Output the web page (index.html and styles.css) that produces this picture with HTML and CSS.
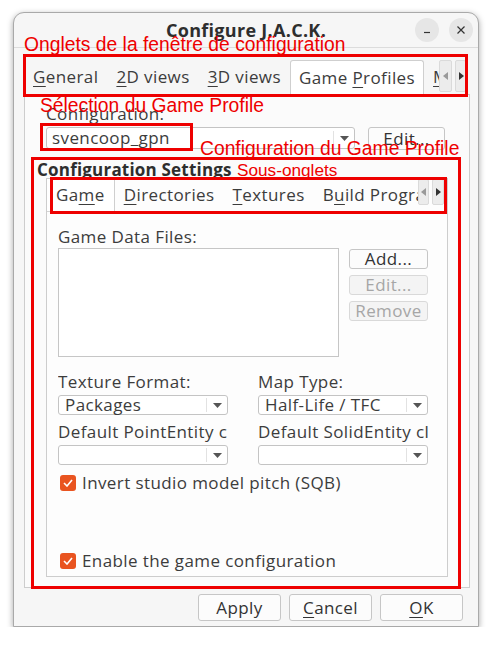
FILE: index.html
```html
<!DOCTYPE html>
<html>
<head>
<meta charset="utf-8">
<link rel="stylesheet" href="styles.css">
</head>
<body>
<div class="window">
  <div class="titlebar">
    <span></span>
    <span class="title">Configure J.A.C.K.</span>
    <div class="wbtns">
      <span class="wbtn"><svg width="10" height="10" viewBox="0 0 10 10"><path d="M2 7.5h6" stroke="#333" stroke-width="1.2"/></svg></span>
      <span class="wbtn"><svg width="10" height="10" viewBox="0 0 10 10"><path d="M1.5 1.5l7 7M8.5 1.5l-7 7" stroke="#333" stroke-width="1.2"/></svg></span>
    </div>
  </div>

  <div class="tabwidget">
    <div class="tabbar">
      <div class="tabs">
        <div class="tab"><span><u>G</u>eneral</span></div>
        <div class="tab"><span><u>2</u>D views</span></div>
        <div class="tab"><span><u>3</u>D views</span></div>
        <div class="tab sel"><span>Game <u>P</u>rofiles</span></div>
        <div class="tab"><span><u>M</u>isc</span></div>
      </div>
      <div class="scroll outer">
        <span class="sbtn left"><svg width="6" height="8" viewBox="0 0 6 8"><path d="M5 0v8L0 4z" fill="#9a9a9a"/></svg></span>
        <span class="sbtn right"><svg width="6" height="8" viewBox="0 0 6 8"><path d="M1 0v8l5-4z" fill="#333"/></svg></span>
      </div>
    </div>

    <div class="pane">
      <div class="config">
        <div class="label">Configuration:</div>
        <div class="config-row">
          <div class="combo wide"><span class="val">svencoop_gpn</span><span class="arr"><svg width="9" height="5" viewBox="0 0 9 5"><path d="M0 0h9L4.5 5z" fill="#555"/></svg></span></div>
          <div class="btn edit">Edit...</div>
        </div>
      </div>

      <div class="gtitle">Configuration Settings</div>
      <div class="group">
        <div class="tabbar inner">
          <div class="tabs">
            <div class="tab sel"><span>Ga<u>m</u>e</span></div>
            <div class="tab"><span><u>D</u>irectories</span></div>
            <div class="tab"><span><u>T</u>extures</span></div>
            <div class="tab"><span>B<u>u</u>ild Programs</span></div>
          </div>
          <div class="scroll">
            <span class="sbtn left"><svg width="6" height="8" viewBox="0 0 6 8"><path d="M5 0v8L0 4z" fill="#9a9a9a"/></svg></span>
            <span class="sbtn right"><svg width="6" height="8" viewBox="0 0 6 8"><path d="M1 0v8l5-4z" fill="#333"/></svg></span>
          </div>
        </div>

        <div class="inner-content">
          <div class="label">Game Data Files:</div>
          <div class="files">
            <div class="list"></div>
            <div class="side">
              <div class="btn small">Add...</div>
              <div class="btn small disabled">Edit...</div>
              <div class="btn small disabled">Remove</div>
            </div>
          </div>

          <div class="grid2">
            <div class="field">
              <div class="label clip">Texture Format:</div>
              <div class="combo"><span class="val">Packages</span><span class="arr"><svg width="9" height="5" viewBox="0 0 9 5"><path d="M0 0h9L4.5 5z" fill="#555"/></svg></span></div>
            </div>
            <div class="field">
              <div class="label clip">Map Type:</div>
              <div class="combo"><span class="val">Half-Life / TFC</span><span class="arr"><svg width="9" height="5" viewBox="0 0 9 5"><path d="M0 0h9L4.5 5z" fill="#555"/></svg></span></div>
            </div>
            <div class="field">
              <div class="label clip">Default PointEntity class:</div>
              <div class="combo"><span class="val"></span><span class="arr"><svg width="9" height="5" viewBox="0 0 9 5"><path d="M0 0h9L4.5 5z" fill="#555"/></svg></span></div>
            </div>
            <div class="field">
              <div class="label clip">Default SolidEntity class:</div>
              <div class="combo"><span class="val"></span><span class="arr"><svg width="9" height="5" viewBox="0 0 9 5"><path d="M0 0h9L4.5 5z" fill="#555"/></svg></span></div>
            </div>
          </div>

          <div class="check first"><span class="box"><svg width="10" height="8" viewBox="0 0 10 8"><path d="M1 4l3 3 5-6" stroke="#fff" stroke-width="1.6" fill="none"/></svg></span><span>Invert studio model pitch (SQB)</span></div>
          <div class="check last"><span class="box"><svg width="10" height="8" viewBox="0 0 10 8"><path d="M1 4l3 3 5-6" stroke="#fff" stroke-width="1.6" fill="none"/></svg></span><span>Enable the game configuration</span></div>
        </div>
      </div>
    </div>
  </div>

  <div class="buttons">
    <div class="btn big"><span>Apply</span></div>
    <div class="btn big"><span><u>C</u>ancel</span></div>
    <div class="btn big"><span><u>O</u>K</span></div>
  </div>
</div>

<div class="annot">
  <div class="note n1">Onglets de la fenêtre de configuration</div>
  <div class="note n2">Sélection du Game Profile</div>
  <div class="note n3">Configuration du Game Profile</div>
  <div class="note n4">Sous-onglets</div>
  <div class="rbox b1"></div>
  <div class="rbox b2"></div>
  <div class="rbox b3"></div>
  <div class="rbox b4"></div>
</div>
</body>
</html>
```

FILE: styles.css
```css
body {
  margin: 0;
  background: #ffffff;
  font-family: "Open Sans", "Noto Sans", sans-serif;
  font-size: 17px;
  line-height: 20px;
  letter-spacing: 0.4px;
  color: #3c3c3c;
}

u {
  text-decoration-thickness: 1px;
  text-underline-offset: 3px;
}

.window {
  margin: 12px 0 0 13px;
  width: 466px;
  box-sizing: border-box;
  border: 1px solid #a9a9a9;
  border-radius: 11px 11px 0 0;
  background: #f6f6f6;
  box-shadow: 0 2px 6px rgba(0, 0, 0, 0.35);
  display: flex;
  flex-direction: column;
  padding-bottom: 5px;
}

.titlebar {
  height: 34px;
  display: grid;
  grid-template-columns: 1fr auto 1fr;
  align-items: center;
  border-bottom: 1px solid #dcdcdc;
}

.title {
  font-weight: 700;
  font-size: 18px;
  letter-spacing: 0.3px;
  color: #2e2e2e;
}

.wbtns {
  justify-self: end;
  display: flex;
  gap: 10px;
  margin-right: 5px;
}

.wbtn {
  width: 24px;
  height: 24px;
  border-radius: 50%;
  background: #e6e6e6;
  display: flex;
  align-items: center;
  justify-content: center;
}

.tabwidget {
  margin: 12px 8px 0 10px;
}

.tabbar {
  display: flex;
  height: 34px;
}

.tabs {
  display: flex;
  flex: 1;
  min-width: 0;
  overflow: hidden;
}

.tab {
  flex-shrink: 0;
  padding: 0 9px;
  display: flex;
  align-items: center;
  white-space: nowrap;
}

.tab.sel {
  background: #ffffff;
  border: 1px solid #cfcfcf;
  border-bottom: none;
  border-radius: 3px 3px 0 0;
  padding: 0 8px;
}

.scroll {
  display: flex;
  gap: 3px;
  align-items: stretch;
  padding: 0 4px 2px 0;
}

.sbtn {
  box-sizing: border-box;
  width: 13px;
  background: #ececec;
  border: 1px solid #dadada;
  border-radius: 2px;
  display: flex;
  align-items: center;
  justify-content: center;
}

.sbtn.right {
  width: 11px;
}

.pane {
  background: #fbfbfb;
  border: 1px solid #cdcdcd;
  padding: 9px 0 10px 12px;
}

.config {
  margin-left: 9px;
}

.config-row {
  display: flex;
  gap: 13px;
  margin-top: 3px;
}

.combo {
  display: flex;
  align-items: center;
  box-sizing: border-box;
  height: 20px;
  border: 1px solid #c4c4c4;
  border-radius: 3px;
  background: #ffffff;
  padding-left: 6px;
}

.combo.wide {
  width: 309px;
  height: 22px;
  padding-left: 5px;
}

.combo .val {
  flex: 1;
  white-space: nowrap;
  overflow: hidden;
}

.combo .arr {
  width: 20px;
  height: 14px;
  border-left: 1px solid #e2e2e2;
  display: flex;
  align-items: center;
  justify-content: center;
}

.btn {
  box-sizing: border-box;
  border: 1px solid #c6c6c6;
  border-radius: 3px;
  background: #fcfcfc;
  display: flex;
  align-items: center;
  justify-content: center;
  color: #333333;
}

.btn.edit {
  width: 77px;
  height: 23px;
}

.gtitle {
  font-weight: 700;
  letter-spacing: 0.2px;
  margin-top: 10px;
  color: #2e2e2e;
}

.group {
  margin: -2px 0 0 9px;
  width: 402px;
  box-sizing: border-box;
  border: 1px solid #cdcdcd;
  background: #fdfdfd;
}

.tabbar.inner {
  height: 32px;
  border-bottom: 1px solid #d4d4d4;
}

.tabbar.inner .tab.sel {
  border-top: none;
  border-left: none;
  border-radius: 0;
  padding: 0 9px;
}

.tabbar.inner .scroll {
  padding: 0 3px 6px 0;
}

.tabbar.inner .sbtn {
  width: 11px;
}

.tabbar.inner .sbtn.right {
  width: 12px;
}

.inner-content {
  padding: 15px 0 5px 11px;
}

.files {
  display: flex;
  gap: 10px;
  margin-top: 1px;
}

.list {
  width: 281px;
  height: 109px;
  box-sizing: border-box;
  border: 1px solid #c6c6c6;
  background: #ffffff;
}

.side {
  display: flex;
  flex-direction: column;
  gap: 6px;
  padding-top: 1px;
}

.btn.small {
  width: 79px;
  height: 20px;
}

.btn.disabled {
  color: #a6a6a6;
  background: #f4f4f4;
  border-color: #d9d9d9;
}

.grid2 {
  display: grid;
  grid-template-columns: 170px 170px;
  column-gap: 30px;
  row-gap: 7px;
  margin-top: 15px;
}

.field .label {
  margin-bottom: 3px;
}

.clip {
  white-space: nowrap;
  overflow: hidden;
}

.check {
  display: flex;
  align-items: center;
  gap: 6px;
  padding-left: 2px;
}

.check.first {
  margin-top: 8px;
}

.check.last {
  margin-top: 58px;
}

.box {
  width: 16px;
  height: 16px;
  border-radius: 3px;
  background: #e95420;
  display: flex;
  align-items: center;
  justify-content: center;
}

.buttons {
  display: flex;
  justify-content: flex-end;
  gap: 8px;
  margin: 6px 15px 0 0;
}

.btn.big {
  width: 83px;
  height: 27px;
}

/* annotation overlay */
.annot {
  position: absolute;
  left: 0;
  top: 0;
  width: 493px;
  height: 646px;
  pointer-events: none;
}

.note {
  position: absolute;
  font-family: "Liberation Sans", Arial, sans-serif;
  font-size: 19.3px;
  line-height: 19px;
  letter-spacing: 0;
  color: #ee0000;
  white-space: nowrap;
}

.n1 { left: 24px; top: 35px; }
.n2 { left: 40px; top: 96px; }
.n3 { left: 200px; top: 139px; }
.n4 { left: 237px; top: 162px; font-size: 17.2px; line-height: 17px; }

.rbox {
  position: absolute;
  border: 3px solid #ee0000;
  box-sizing: border-box;
}

.b1 { left: 23px; top: 54px; width: 445px; height: 43px; }
.b2 { left: 40px; top: 123px; width: 153px; height: 28px; }
.b3 { left: 31px; top: 157px; width: 430px; height: 432px; }
.b4 { left: 50px; top: 177px; width: 397px; height: 37px; }
```
